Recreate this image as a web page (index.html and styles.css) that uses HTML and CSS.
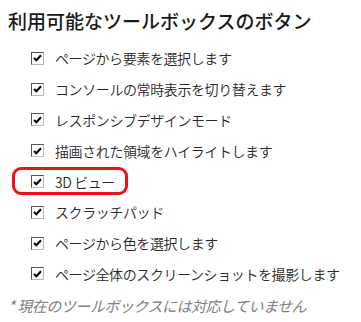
FILE: index.html
```html
<!DOCTYPE html>
<html lang="ja">
<head>
<meta charset="utf-8">
<link rel="stylesheet" href="styles.css">
</head>
<body>
<h1 class="title">利用可能なツールボックスのボタン</h1>
<ul class="list">
  <li class="item"><span class="cb"><svg viewBox="0 0 9 8" width="9" height="8"><path d="M1 4 L3.3 6.3 L8 1.3" fill="none" stroke="#000" stroke-width="2"/></svg></span><span class="label">ページから要素を選択します</span></li>
  <li class="item"><span class="cb"><svg viewBox="0 0 9 8" width="9" height="8"><path d="M1 4 L3.3 6.3 L8 1.3" fill="none" stroke="#000" stroke-width="2"/></svg></span><span class="label">コンソールの常時表示を切り替えます</span></li>
  <li class="item"><span class="cb"><svg viewBox="0 0 9 8" width="9" height="8"><path d="M1 4 L3.3 6.3 L8 1.3" fill="none" stroke="#000" stroke-width="2"/></svg></span><span class="label">レスポンシブデザインモード</span></li>
  <li class="item"><span class="cb"><svg viewBox="0 0 9 8" width="9" height="8"><path d="M1 4 L3.3 6.3 L8 1.3" fill="none" stroke="#000" stroke-width="2"/></svg></span><span class="label">描画された領域をハイライトします</span></li>
  <li class="item highlight"><span class="cb"><svg viewBox="0 0 9 8" width="9" height="8"><path d="M1 4 L3.3 6.3 L8 1.3" fill="none" stroke="#000" stroke-width="2"/></svg></span><span class="label">3D ビュー</span><span class="ring"></span></li>
  <li class="item"><span class="cb"><svg viewBox="0 0 9 8" width="9" height="8"><path d="M1 4 L3.3 6.3 L8 1.3" fill="none" stroke="#000" stroke-width="2"/></svg></span><span class="label">スクラッチパッド</span></li>
  <li class="item"><span class="cb"><svg viewBox="0 0 9 8" width="9" height="8"><path d="M1 4 L3.3 6.3 L8 1.3" fill="none" stroke="#000" stroke-width="2"/></svg></span><span class="label">ページから色を選択します</span></li>
  <li class="item"><span class="cb"><svg viewBox="0 0 9 8" width="9" height="8"><path d="M1 4 L3.3 6.3 L8 1.3" fill="none" stroke="#000" stroke-width="2"/></svg></span><span class="label">ページ全体のスクリーンショットを撮影します</span></li>
</ul>
<p class="note">* 現在のツールボックスには対応していません</p>
</body>
</html>
```
FILE: styles.css
```css
html, body {
  margin: 0;
  padding: 0;
  background: #fff;
}
body {
  font-family: "Noto Sans CJK JP", "Noto Sans", sans-serif;
  color: #222;
  padding: 8px 0 0 8px;
}
.title {
  margin: 0;
  font-size: 19px;
  font-weight: 500;
  line-height: 26px;
  color: #1a1a1a;
  letter-spacing: 0;
}
.list {
  list-style: none;
  margin: 9px 0 0 0;
  padding: 0 0 0 23px;
}
.item {
  position: relative;
  display: flex;
  align-items: center;
  height: 30.8px;
  font-size: 14px;
  font-weight: 350;
  color: #2a2a2a;
}
.cb {
  box-sizing: border-box;
  width: 13px;
  height: 13px;
  border: 1px solid;
  border-color: #555 #b8b8b8 #b8b8b8 #555;
  background: #fff;
  display: flex;
  align-items: center;
  justify-content: center;
  margin-right: 11px;
  flex: none;
}
.cb svg { display: block; }
.label {
  white-space: nowrap;
  letter-spacing: -0.4px;
}
.ring {
  position: absolute;
  left: -19px;
  top: 1px;
  width: 116px;
  height: 28px;
  box-sizing: border-box;
  border: 3px solid #e8141c;
  border-radius: 9px;
}
.note {
  margin: 6px 0 0 0;
  font-size: 15px;
  font-style: italic;
  color: #808080;
  letter-spacing: -0.5px;
}
```
